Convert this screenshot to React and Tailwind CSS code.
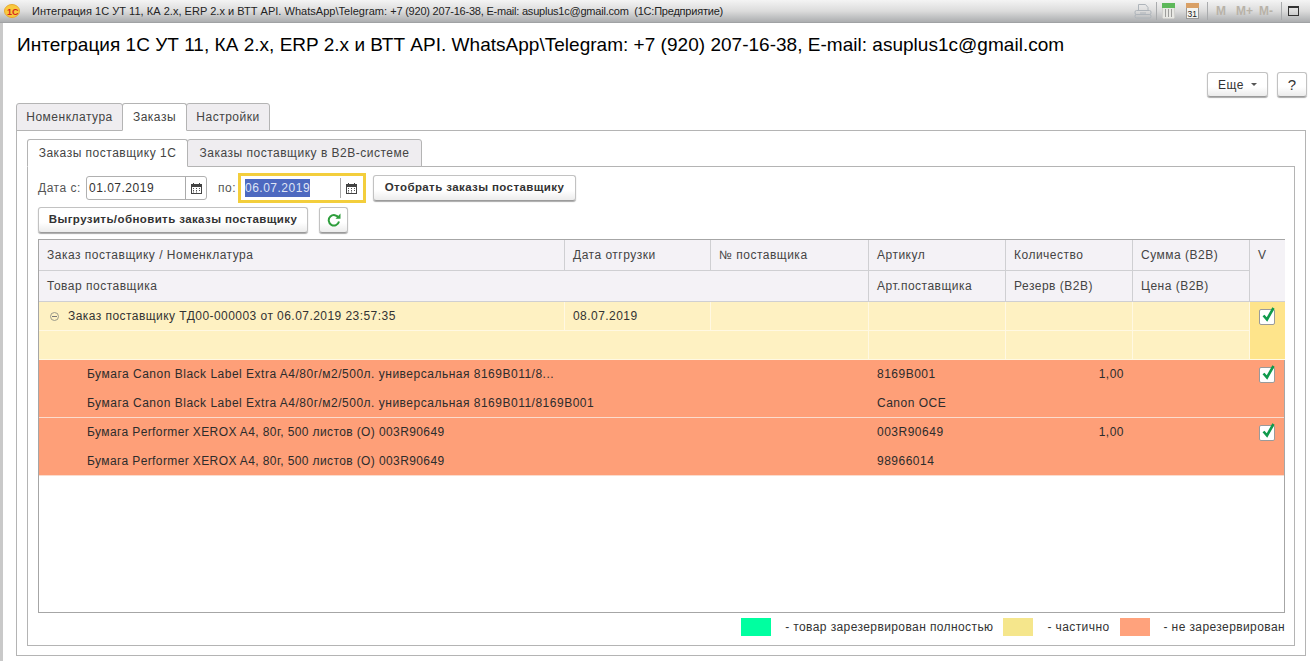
// App.jsx
import React from "react";

const font = { fontFamily: '"Liberation Sans", Arial, sans-serif' };

function CalendarIcon() {
    return (
        <svg width="11" height="11" viewBox="0 0 11 11" className="shrink-0">
            <rect x="0.5" y="1.5" width="10" height="9" fill="#fff" stroke="#444" />
            <rect x="0" y="1" width="11" height="3" fill="#444" />
            <rect x="2" y="0" width="1" height="2" fill="#444" />
            <rect x="8" y="0" width="1" height="2" fill="#444" />
            <path d="M2 5.5h1M5 5.5h1M8 5.5h1M2 7.5h1M5 7.5h1M8 7.5h1M2 9h1M5 9h1" stroke="#555" strokeWidth="1" />
        </svg>
    );
}

function Logo() {
    return (
        <svg width="16" height="14" viewBox="0 0 16 14" className="shrink-0">
            <ellipse cx="8" cy="7" rx="7.5" ry="6.5" fill="#f9c93e" stroke="#e8a92c" />
            <text x="3" y="10.5" fontSize="9" fontWeight="700" fill="#d4261c" fontFamily="Liberation Sans">1C</text>
        </svg>
    );
}

function PrintIcon() {
    return (
        <svg width="18" height="16" viewBox="0 0 18 16" className="shrink-0" fill="none" stroke="#aeb4ba">
            <path d="M4.5 7V1.5h7l2.5 3V7" />
            <rect x="1" y="7.5" width="16" height="4" rx="1.5" />
            <rect x="1" y="11.5" width="16" height="3.5" rx="1.5" />
            <path d="M6 10h6" />
        </svg>
    );
}

function TableIcon() {
    return (
        <svg width="13" height="16" viewBox="0 0 13 16" className="shrink-0">
            <rect x="0" y="0" width="13" height="16" fill="#e8e8e4" stroke="#888" strokeWidth="0.5" />
            <rect x="0" y="0" width="13" height="5" fill="#5db85a" />
            <path d="M3 7h1M6 7h1M9 7h1M3 9h1M6 9h1M9 9h1M3 11h1M6 11h1M9 11h1M3 13h1M6 13h1M9 13h1" stroke="#555" />
        </svg>
    );
}

function DayIcon() {
    return (
        <svg width="13" height="16" viewBox="0 0 13 16" className="shrink-0">
            <rect x="0.5" y="0.5" width="12" height="15" fill="#f4f4f0" stroke="#999" />
            <rect x="0" y="0" width="13" height="5" fill="#d9a066" />
            <text x="1.5" y="13.5" fontSize="8.5" fill="#222" fontFamily="Liberation Sans">31</text>
        </svg>
    );
}

function CheckBox() {
    return (
        <span className="relative block w-[16px] h-[16px] rounded-[2px] border border-[#9a9a9a] bg-white">
            <svg width="17" height="18" viewBox="0 0 17 18" className="absolute -top-[4px] left-0">
                <path d="M3.5 9.5l3.5 4 6.5-11.5" fill="none" stroke="#0f9a4c" strokeWidth="2.6" />
            </svg>
        </span>
    );
}

function Btn({ className = "", children }) {
    return (
        <button
            className={`flex items-center justify-center rounded-[3px] border border-[#c2c2c2] border-b-[#9b9b9b] bg-gradient-to-b from-white from-60% to-[#ececec] shadow-[0_1px_1px_#aaa] text-[#333] ${className}`}
        >
            {children}
        </button>
    );
}

function Tab({ active, className = "", children }) {
    return (
        <div
            className={`flex items-center justify-center rounded-t-[3px] border border-[#b4b4b4] h-[28px] tracking-[0.5px] text-[#444] -mr-px ${
                active ? "bg-white border-b-white z-10" : "bg-[#efedf0]"
            } ${className}`}
        >
            {children}
        </div>
    );
}

function DateInput({ value, selected, className = "" }) {
    return (
        <div className={`flex items-center h-full ${className}`}>
            <div className="flex-1 pl-[2px] tracking-[0.5px] text-[#333]">
                {selected ? <span className="bg-[#4d69c0] text-[#dfe4f5] py-[2px]">{value}</span> : value}
            </div>
            <div className="w-[21px] h-full flex items-center justify-center border-l border-[#aaa]">
                <CalendarIcon />
            </div>
        </div>
    );
}

const columns = "grid grid-cols-[526px_146px_158px_137px_127px_117px_35px]";

function HeaderCell({ className = "", children }) {
    return (
        <div className={`flex items-center pl-2 bg-[#f4f2f6] border-r border-b border-[#cfcfd2] h-[31px] tracking-[0.5px] text-[#444] ${className}`}>
            {children}
        </div>
    );
}

function YellowCell({ className = "", children }) {
    return (
        <div className={`flex items-center pl-2 bg-[#fef1c2] border-r border-b border-[#fff8e2] h-[29px] tracking-[0.45px] text-[#333] ${className}`}>
            {children}
        </div>
    );
}

function OrangeRow({ name, shortName, art, supplierArt, qty, nameClass = "" }) {
    return (
        <div className={`${columns} bg-[#fe9f78] border-b border-[#fbdccd] h-[58px] tracking-[0.5px] text-[#2c2c2c]`}>
            <div className={`flex items-center h-[28px] pl-[48px] pr-2 whitespace-nowrap overflow-hidden ${nameClass}`}>{shortName}</div>
            <div className="col-span-2" />
            <div className="flex items-center h-[28px] pl-2">{art}</div>
            <div className="flex items-center justify-end h-[28px] pr-[9px]">{qty}</div>
            <div />
            <div className="row-span-2 pl-[9px] pt-[7px]"><CheckBox /></div>
            <div className={`col-span-3 flex items-center h-[29px] pl-[48px] ${nameClass}`}>{name}</div>
            <div className="flex items-center h-[29px] pl-2">{supplierArt}</div>
        </div>
    );
}

export default function App() {
    return (
        <div style={font} className="w-[1310px] h-[661px] overflow-hidden flex flex-col bg-white text-[12px] leading-none">
            <div className="h-[23px] shrink-0 flex items-center pl-[4px] pr-[11px] bg-gradient-to-b from-[#f4f4f4] via-[#dcdcdc] to-[#acaeb0] border-b border-[#a0a2a4]">
                <Logo />
                <span className="ml-[12px] text-[#222] whitespace-nowrap text-[11px] tracking-[0.03px]">
                    Интеграция 1С УТ 11, КА 2.x, ERP 2.x и ВТТ API. WhatsApp\Telegram:{" "}
                    <span className="tracking-[-0.22px]">+7 (920) 207-16-38, E-mail: asuplus1c@gmail.com&nbsp;&nbsp;(1С:Предприятие)</span>
                </span>
                <div className="ml-auto flex items-center">
                    <PrintIcon />
                    <span className="ml-[4px] mr-[5px] w-px h-[18px] bg-[#a9abad]" />
                    <TableIcon />
                    <span className="ml-[11px]"><DayIcon /></span>
                    <span className="ml-[8px] mr-[8px] w-px h-[18px] bg-[#a9abad]" />
                    <div className="flex text-[12px] font-bold text-[#b8b2a8]">
                        <span>M</span>
                        <span className="ml-[10px]">M+</span>
                        <span className="ml-[6px]">M-</span>
                    </div>
                    <span className="ml-[8px] mr-[6px] w-px h-[18px] bg-[#a9abad]" />
                    <span className="w-[11px] h-[10px] border border-[#333] border-t-2" />
                </div>
            </div>

            <div className="flex-1 min-h-0 flex flex-col border-l-[3px] border-[#c9c9c9]">
                <div className="h-[45px] shrink-0 pl-[14px] pb-[3px] flex items-center text-[19px] tracking-[0.02px] text-black whitespace-nowrap">
                    Интеграция 1С УТ 11, КА 2.x, ERP 2.x и ВТТ API. WhatsApp\Telegram: +7 (920) 207-16-38, E-mail: asuplus1c@gmail.com
                </div>

                <div className="h-[35px] shrink-0 flex justify-end items-start gap-[9px] pr-[3px] pt-[4px]">
                    <Btn className="w-[61px] h-[25px] tracking-[0.5px]">
                        Еще
                        <span className="ml-[7px] border-x-[3px] border-t-[3px] border-x-transparent border-t-[#555]" />
                    </Btn>
                    <Btn className="w-[30px] h-[25px] text-[15px]">?</Btn>
                </div>

                <div className="pl-[13px] flex -mb-px">
                    <Tab className="w-[107px]">Номенклатура</Tab>
                    <Tab active className="w-[65px]">Заказы</Tab>
                    <Tab className="w-[84px]">Настройки</Tab>
                </div>

                <div className="ml-[13px] mr-[4px] h-[526px] shrink-0 border border-[#b4b4b4] px-[10px] pt-[8px]">
                    <div className="flex -mb-px">
                        <Tab active className="w-[161px]">Заказы поставщику 1С</Tab>
                        <Tab className="w-[235px]">Заказы поставщику в В2В-системе</Tab>
                    </div>

                    <div className="h-[480px] border border-[#b4b4b4] flex flex-col px-[10px]">
                        <div className="flex items-center h-[36px] pt-[6px] shrink-0">
                            <span className="w-[48px] tracking-[0.5px] text-[#555]">Дата с:</span>
                            <DateInput value="01.07.2019" className="w-[121px] !h-[24px] border border-[#b0b0b0] rounded-[3px]" />
                            <span className="ml-[11px] w-[20px] tracking-[0.5px] text-[#555]">по:</span>
                            <div className="w-[128px] h-[30px] border-[3px] border-[#f3ce3c] pl-[2px] pr-[2px] py-[2px]">
                                <DateInput selected value="06.07.2019" />
                            </div>
                            <Btn className="ml-[7px] w-[203px] h-[26px] font-bold tracking-[0.4px] text-[11.5px]">Отобрать заказы поставщику</Btn>
                        </div>
                        <div className="flex items-center gap-[11px] h-[26px] mt-[4px] shrink-0">
                            <Btn className="w-[270px] h-[26px] font-bold tracking-[0.4px] text-[11.5px]">Выгрузить/обновить заказы поставщику</Btn>
                            <Btn className="w-[29px] h-[26px]">
                                <svg width="14" height="14" viewBox="0 0 14 14" fill="none">
                                    <path d="M11.6 5A5.2 5.2 0 1 0 12 8.5" stroke="#2e9e3c" strokeWidth="2" />
                                    <path d="M8.5 5.8h5V0.6z" fill="#2e9e3c" />
                                </svg>
                            </Btn>
                        </div>

                        <div className="mt-[6px] w-[1247px] h-[374px] shrink-0 border border-[#a6a6a6] bg-white">
                            <div className={columns}>
                                <HeaderCell>Заказ поставщику / Номенклатура</HeaderCell>
                                <HeaderCell>Дата отгрузки</HeaderCell>
                                <HeaderCell>№ поставщика</HeaderCell>
                                <HeaderCell>Артикул</HeaderCell>
                                <HeaderCell>Количество</HeaderCell>
                                <HeaderCell>Сумма (В2В)</HeaderCell>
                                <HeaderCell className="row-span-2 !h-[62px] items-start pt-[9px] !border-r-0">V</HeaderCell>
                                <HeaderCell className="col-span-3">Товар поставщика</HeaderCell>
                                <HeaderCell>Арт.поставщика</HeaderCell>
                                <HeaderCell>Резерв (В2В)</HeaderCell>
                                <HeaderCell>Цена (В2В)</HeaderCell>
                            </div>

                            <div className={columns}>
                                <YellowCell>
                                    <span className="mr-[9px] ml-[3px] w-[9px] h-[9px] rounded-full border border-[#9a9a8a] flex items-center justify-center">
                                        <span className="w-[5px] h-px bg-[#777]" />
                                    </span>
                                    Заказ поставщику ТД00-000003 от 06.07.2019 23:57:35
                                </YellowCell>
                                <YellowCell>08.07.2019</YellowCell>
                                <YellowCell />
                                <YellowCell />
                                <YellowCell />
                                <YellowCell />
                                <div className="row-span-2 bg-[#fee48b] border-b border-[#fff8e2] pl-[9px] pt-[7px]"><CheckBox /></div>
                                <YellowCell className="col-span-3" />
                                <YellowCell />
                                <YellowCell />
                                <YellowCell />
                            </div>

                            <OrangeRow
                                shortName="Бумага Canon Black Label Extra A4/80г/м2/500л. универсальная 8169B011/8..."
                                name="Бумага Canon Black Label Extra A4/80г/м2/500л. универсальная 8169B011/8169B001"
                                art="8169B001"
                                supplierArt="Canon OCE"
                                qty="1,00"
                            />
                            <OrangeRow
                                nameClass="tracking-[0.39px]"
                                shortName="Бумага Performer XEROX A4, 80г, 500 листов (О) 003R90649"
                                name="Бумага Performer XEROX A4, 80г, 500 листов (О) 003R90649"
                                art="003R90649"
                                supplierArt="98966014"
                                qty="1,00"
                            />
                        </div>

                        <div className="flex items-center justify-end h-[32px] pb-[5px] tracking-[0.4px] text-[#333] shrink-0 -mr-[1px] whitespace-nowrap">
                            <span className="w-[30px] h-[18px] bg-[#00ffa0]" />
                            <span className="ml-[14px]">- товар зарезервирован полностью</span>
                            <span className="ml-[10px] w-[30px] h-[18px] bg-[#f5e68c]" />
                            <span className="ml-[14px]">- частично</span>
                            <span className="ml-[11px] w-[30px] h-[18px] bg-[#ffa27c]" />
                            <span className="ml-[13px]">- не зарезервирован</span>
                        </div>
                    </div>
                </div>
            </div>
        </div>
    );
}
